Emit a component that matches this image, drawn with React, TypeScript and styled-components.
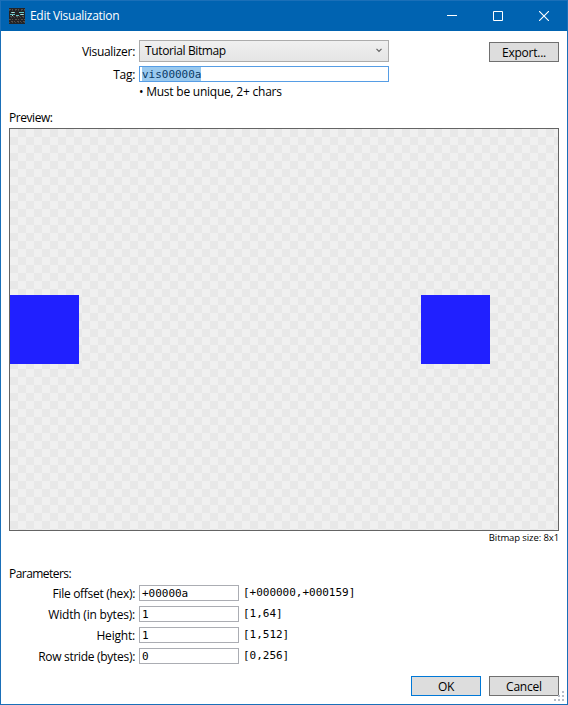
import React from "react";
import styled, { createGlobalStyle } from "styled-components";

const Global = createGlobalStyle`
  * { box-sizing: border-box; }
  html, body { margin: 0; background: #fff; }
  body { font: 12px/16px "Open Sans", "Noto Sans", sans-serif; color: #000; }
`;

const mono = `font-family: "DejaVu Sans Mono", monospace; font-size: 11px; letter-spacing: -0.02px;`;

const Window = styled.div`
  width: 568px;
  height: 705px;
  display: flex;
  flex-direction: column;
  position: relative;
  border: 1px solid #1a6fb8;
  background: #fff;
  overflow: hidden;
`;

const TitleBar = styled.header`
  height: 30px;
  flex: none;
  display: flex;
  align-items: center;
  padding: 0 0 0 8px;
  background: #0063b1;
  color: #fff;
`;

const Title = styled.h1`
  flex: 1;
  margin: 0 0 0 5px;
  font-size: 12px;
  font-weight: 400;
`;

const WindowButton = styled.div`
  width: 46px;
  height: 30px;
  display: grid;
  place-items: center;
`;

const Content = styled.main`
  flex: 1;
  display: flex;
  flex-direction: column;
  padding: 8px;
`;

const TopRow = styled.div`
  display: flex;
  justify-content: space-between;
  align-items: flex-start;
  height: 71px;
`;

const Form = styled.div`
  display: grid;
  grid-template-columns: 126px 250px;
  grid-template-rows: 23px 24px 12px;
  column-gap: 4px;
  align-items: center;
`;

const Text = styled.span<{ $spacing?: number }>`
  white-space: pre;
  letter-spacing: ${(p) => p.$spacing ?? -0.3}px;
`;

const Label = styled(Text)`
  justify-self: end;
  padding-top: 2px;
`;

const Hint = styled(Text)`
  grid-column: 2;
`;

const Select = styled.div`
  height: 22px;
  display: flex;
  align-items: center;
  justify-content: space-between;
  padding: 0 5px;
  border: 1px solid #acacac;
  background: linear-gradient(#f0f0f0, #e5e5e5);
`;

const Input = styled.div<{ $focused?: boolean }>`
  height: 16px;
  display: flex;
  align-items: center;
  padding: 0 2px;
  border: 1px solid ${(p) => (p.$focused ? "#569de5" : "#abadb3")};
  ${mono}
  line-height: 16px;
`;

const Selection = styled.span`
  height: 14px;
  background: #99c9ef;
  color: #0a3a66;
`;

const Value = styled.span`
  height: 14px;
`;

const Button = styled.button<{ $primary?: boolean }>`
  width: 70px;
  height: 20px;
  padding: 1px 0 0;
  border: 1px solid ${(p) => (p.$primary ? "#0078d7" : "#707070")};
  background: #ddd;
  font: inherit;
  line-height: 17px;
  color: #000;
`;

const ExportButton = styled(Button)`
  margin-top: 3px;
`;

const Preview = styled.div`
  height: 403px;
  margin-top: 2px;
  flex: none;
  display: grid;
  grid-template-columns: repeat(8, 68.5px);
  align-items: center;
  border: 1px solid #646464;
  background: repeating-conic-gradient(#e8e8e8 0 25%, #f0f0f0 0 50%) 0 0 / 16px 16px;
`;

const Pixel = styled.div<{ $column: number }>`
  grid-row: 1;
  grid-column: ${(p) => p.$column};
  width: 69px;
  height: 69px;
  background: #2020ff;
`;

const Caption = styled.div`
  height: 35px;
  font-size: 9.5px;
  line-height: 14px;
  text-align: right;
`;

const Params = styled.div`
  display: grid;
  grid-template-columns: 126px 100px auto;
  grid-auto-rows: 21px;
  column-gap: 4px;
  align-items: center;
`;

const Range = styled.span`
  ${mono}
  line-height: 14px;
`;

const Footer = styled.footer`
  display: flex;
  justify-content: flex-end;
  gap: 8px;
  margin-top: auto;
`;

const Grip = styled.svg`
  position: absolute;
  right: 2px;
  bottom: 2px;
`;

const params = [
  { label: "File offset (hex):", value: "+00000a", range: "[+000000,+000159]", spacing: -0.3 },
  { label: "Width (in bytes):", value: "1", range: "[1,64]", spacing: -0.2 },
  { label: "Height:", value: "1", range: "[1,512]", spacing: -0.2 },
  { label: "Row stride (bytes):", value: "0", range: "[0,256]", spacing: -0.3 },
];

const gripDots = [[8, 0], [4, 4], [8, 4], [0, 8], [4, 8], [8, 8]];

const AppIcon = () => (
  <svg width="16" height="16" viewBox="0 0 16 16" shapeRendering="crispEdges">
    <path fill="#242326" d="M0 0h16v16H0z" />
    <path stroke="#57504c" strokeDasharray="2 1 1 2" d="M0 1.5h16M1 8.5h15M0 11.5h16M2 13.5h14" />
    <path stroke="#3d4647" strokeDasharray="1 2" d="M0 2.5h16M2 9.5h14M0 14.5h16" />
    <path stroke="#66c5c5" d="M2 4.5h4M10 4.5h5M1 6.5h5M7 7.5h3M11 6.5h4" />
    <path stroke="#b7dad6" d="M3 4.5h2M12 6.5h2M3 7.5h1" />
  </svg>
);

export default function App() {
  return (
    <Window>
      <Global />
      <TitleBar>
        <AppIcon />
        <Title><Text>Edit Visualization</Text></Title>
        <WindowButton><svg width="10" height="10"><path d="M0 4.5h10" stroke="#fff" /></svg></WindowButton>
        <WindowButton><svg width="10" height="10"><path d="M.5 .5h9v9h-9z" stroke="#fff" fill="none" /></svg></WindowButton>
        <WindowButton><svg width="10" height="10"><path d="M0 0l10 10M10 0L0 10" stroke="#fff" strokeWidth="1.1" /></svg></WindowButton>
      </TitleBar>
      <Content>
        <TopRow>
          <Form>
            <Label>Visualizer:</Label>
            <Select>
              <Text $spacing={-0.37}>Tutorial Bitmap</Text>
              <svg width="8" height="8"><path d="M1.5 1.8l2.5 2.5 2.5-2.5" stroke="#606060" strokeWidth="1.2" fill="none" /></svg>
            </Select>
            <Label>Tag:</Label>
            <Input $focused><Selection>vis00000a</Selection></Input>
            <Hint $spacing={-0.23}>• Must be unique, 2+ chars</Hint>
          </Form>
          <ExportButton><Text $spacing={-0.25}>Export...</Text></ExportButton>
        </TopRow>
        <Text $spacing={-0.45}>Preview:</Text>
        <Preview>
          <Pixel $column={1} />
          <Pixel $column={7} />
        </Preview>
        <Caption><Text $spacing={-0.1}>Bitmap size: 8x1</Text></Caption>
        <Text $spacing={-0.55}>Parameters:</Text>
        <Params>
          {params.map((p) => (
            <React.Fragment key={p.label}>
              <Label $spacing={p.spacing}>{p.label}</Label>
              <Input><Value>{p.value}</Value></Input>
              <Range>{p.range}</Range>
            </React.Fragment>
          ))}
        </Params>
        <Footer>
          <Button $primary><Text>OK</Text></Button>
          <Button><Text $spacing={-0.2}>Cancel</Text></Button>
        </Footer>
      </Content>
      <Grip width="11" height="11" shapeRendering="crispEdges">
        {gripDots.map(([x, y]) => (
          <rect key={`${x}-${y}`} x={x} y={y} width="2" height="2" fill="#b8bec8" />
        ))}
      </Grip>
    </Window>
  );
}
